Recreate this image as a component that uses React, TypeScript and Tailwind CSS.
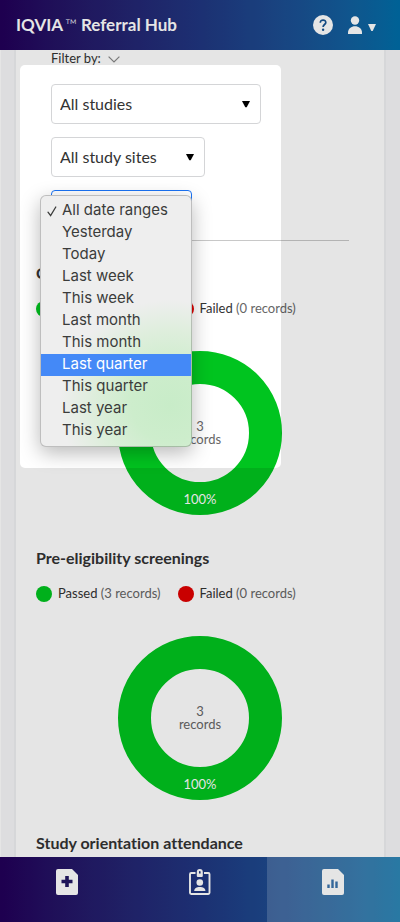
import React, { useState } from "react";

const DATE_RANGES = [
  "All date ranges",
  "Yesterday",
  "Today",
  "Last week",
  "This week",
  "Last month",
  "This month",
  "Last quarter",
  "This quarter",
  "Last year",
  "This year",
];

function FilterSelect({
  label,
  options,
  className,
}: {
  label: string;
  options: string[];
  className: string;
}) {
  return (
    <div className={`relative h-10 ${className}`}>
      <select
        aria-label={label}
        className="h-full w-full appearance-none rounded border border-[#d4d5d7] bg-white pl-2 pr-8 text-base text-[#333] outline-none"
      >
        {options.map((o) => (
          <option key={o}>{o}</option>
        ))}
      </select>
      <svg className="pointer-events-none absolute right-[11px] top-[17px] h-[7px] w-2" viewBox="0 0 8 7">
        <path d="M0 0h8L4.700 6.200H3.300z" fill="#000" />
      </svg>
    </div>
  );
}

function DateRangeFilter() {
  const [selected, setSelected] = useState("All date ranges");
  const [active, setActive] = useState("Last quarter");
  return (
    <div className="relative h-10 w-[141px]">
      <button
        type="button"
        aria-label="Date range"
        aria-expanded="true"
        className="h-full w-full rounded border border-[#1a73f5] bg-white"
      />
      <ul className="absolute -left-[11px] top-[5px] z-20 w-[152px] rounded-md border border-black/20 bg-[#eeeeee] bg-[radial-gradient(ellipse_110px_105px_at_130px_210px,#c8ecc8_0%,#cdedcc_35%,#deeedc_70%,#eeeeee_100%)] bg-origin-border py-1 font-['Inter',sans-serif] text-[15px] shadow-[0_6px_20px_rgba(0,0,0,0.28)]">
        {DATE_RANGES.map((r) => (
          <li key={r}>
            <button
              type="button"
              onMouseEnter={() => setActive(r)}
              onClick={() => setSelected(r)}
              className={
                "flex h-[22px] w-full items-center pb-0.5 text-left whitespace-nowrap " +
                (r === active ? "bg-[#4489f7] text-white" : "text-[#3b3c3b]")
              }
            >
              <span className="flex w-[21px] shrink-0 justify-center pt-0.5">
                {r === selected && (
                  <svg className="h-[11px] w-[10px]" viewBox="0 0 10 11">
                    <path d="M1 6.200 3.600 9.600 8.800 1" fill="none" stroke="#3b3c3b" strokeWidth="1.300" strokeLinecap="round" />
                  </svg>
                )}
              </span>
              {r}
            </button>
          </li>
        ))}
      </ul>
    </div>
  );
}

function LegendItem({ color, name, count }: { color: string; name: string; count: number }) {
  return (
    <li className="flex items-center gap-1.5">
      <span className={`size-4 rounded-full ${color}`} />
      <span className="text-[#666]">
        <span className="text-[#333]">{name}</span> ({count} records)
      </span>
    </li>
  );
}

function SectionTitle({ children }: { children: string }) {
  return <h2 className="text-base leading-6 font-bold text-[#333]">{children}</h2>;
}

function ResultSection({ title }: { title: string }) {
  return (
    <section className="px-5 pb-[31px]">
      <SectionTitle>{title}</SectionTitle>
      <ul className="mt-3.5 flex h-5 items-center gap-[17px] text-[13px]">
        <LegendItem color="bg-[#00c41f]" name="Passed" count={3} />
        <LegendItem color="bg-[#e00000]" name="Failed" count={0} />
      </ul>
      <svg className="mx-auto mt-8 block size-[164px]" viewBox="0 0 164 164" role="img" aria-label={title}>
        <circle cx="82" cy="82" r="65.5" fill="none" stroke="#00c41f" strokeWidth="33" />
        <g textAnchor="middle" fontSize="13">
          <text x="82" y="80" fill="#666">3</text>
          <text x="82" y="93" fill="#666">records</text>
          <text x="82" y="153" fill="#fff">100%</text>
        </g>
      </svg>
    </section>
  );
}

export default function App() {
  return (
    <div className="relative flex h-screen flex-col overflow-hidden bg-[#f6f7f9] font-['Lato',sans-serif] [font-variant-ligatures:no-common-ligatures]">
      <header className="flex h-[50px] shrink-0 items-center justify-between bg-linear-to-r from-[#220059] via-[#203680] to-[#006da7] pr-6 pl-4 text-white">
        <h1 className="flex items-center text-[17px] font-bold">
          IQVIA
          <span className="mr-1 ml-0.5 text-base font-light">™</span>
          Referral Hub
        </h1>
        <div className="flex items-center gap-[15px]">
          <button type="button" aria-label="Help">
            <svg className="size-5" viewBox="0 0 20 20">
              <circle cx="10" cy="10" r="10" fill="#fff" />
              <path d="M7.300 7.700c0-3.600 5.600-3.400 5.500-.1-.1 1.900-2.700 2-2.700 4.300" fill="none" stroke="#165391" strokeWidth="1.700" />
              <circle cx="10.100" cy="14.800" r="1.200" fill="#165391" />
            </svg>
          </button>
          <button type="button" aria-label="Account" className="flex items-center gap-[6px]">
            <svg className="h-[18px] w-[14px]" viewBox="0 0 14 18">
              <circle cx="7" cy="4.500" r="4.200" fill="#fff" />
              <path d="M0 18v-1.500C0 12.500 3.300 10.200 7 10.200s7 2.300 7 6.300V18z" fill="#fff" />
            </svg>
            <svg className="mt-1 h-[7px] w-2" viewBox="0 0 8 7">
              <path d="M0 0h8L4.700 7H3.300z" fill="#fff" />
            </svg>
          </button>
        </div>
      </header>

      <main className="min-h-0 flex-1 overflow-y-auto border-l border-white pr-3.5 pl-[13px] [scrollbar-width:none]">
        <div className="border-x-2 border-[#eff0f2] bg-white">
          <div className="mx-[35px] border-b border-[#c8c8c8] pb-2.5">
            <button type="button" className="flex h-[18px] items-center gap-[7px] text-[13px] text-[#333]">
              Filter by:
              <svg className="h-[7px] w-3" viewBox="0 0 12 7">
                <path d="M.6.600 6 6 11.400.600" fill="none" stroke="#888" strokeWidth="1.200" />
              </svg>
            </button>
            <div className="mt-4 flex flex-col gap-[13px]">
              <FilterSelect label="Study" options={["All studies"]} className="w-[210px]" />
              <FilterSelect label="Study site" options={["All study sites"]} className="w-[154px]" />
              <DateRangeFilter />
            </div>
          </div>
          <div className="pt-5">
            <ResultSection title="C" />
            <ResultSection title="Pre-eligibility screenings" />
            <section className="px-5 pb-8">
              <SectionTitle>Study orientation attendance</SectionTitle>
            </section>
          </div>
        </div>
      </main>

      <nav className="grid h-[65px] shrink-0 grid-cols-3 bg-linear-to-r from-[#220059] via-[#203680] to-[#006da7]">
        <a href="#new" aria-label="New referral" className="flex justify-center pt-3">
          <svg className="h-[26px] w-[22px]" viewBox="0 0 22 26">
            <path d="M2 0h14l6 6v18a2 2 0 0 1-2 2H2a2 2 0 0 1-2-2V2a2 2 0 0 1 2-2z" fill="#fff" />
            <path d="M9.200 7h3.600v3.700h3.700v3.600h-3.700V18H9.200v-3.700H5.500v-3.600h3.700z" fill="#231862" />
          </svg>
        </a>
        <a href="#patients" aria-label="Patients" className="flex justify-center pt-3">
          <svg className="h-[26px] w-[22px]" viewBox="0 0 22 26">
            <path d="M6.500 4H2.200A1.200 1.200 0 0 0 1 5.200v18.600A1.200 1.200 0 0 0 2.200 25h17.100a1.200 1.200 0 0 0 1.200-1.200V5.200A1.200 1.200 0 0 0 19.300 4H15" fill="none" stroke="#fff" strokeWidth="1.900" />
            <path fillRule="evenodd" d="M7.800 3a3 3 0 0 1 6 0v4a1 1 0 0 1-1 1h-4a1 1 0 0 1-1-1zM10 2.800v1.700h1.600V2.800a.8.800 0 0 0-1.600 0z" fill="#fff" />
            <circle cx="10.800" cy="13.500" r="3.300" fill="#fff" />
            <path d="M5.200 22c0-2.800 2.400-4.100 5.600-4.100s5.600 1.300 5.600 4.100z" fill="#fff" />
          </svg>
        </a>
        <a href="#reports" aria-label="Reports" aria-current="page" className="flex justify-center bg-white/18 pt-3">
          <svg className="h-[26px] w-[22px]" viewBox="0 0 22 26">
            <path d="M2 0h14l6 6v18a2 2 0 0 1-2 2H2a2 2 0 0 1-2-2V2a2 2 0 0 1 2-2z" fill="#fff" />
            <path d="M6.500 19v-3.500M10.500 19v-8.500M14.500 19v-6.500" stroke="#3b73ac" strokeWidth="2.400" />
          </svg>
        </a>
      </nav>

      <div className="pointer-events-none absolute top-[65px] left-5 z-10 h-[403px] w-[261px] rounded-[5px] shadow-[0_0_0_2000px_rgba(0,0,0,0.1)]" />
    </div>
  );
}
